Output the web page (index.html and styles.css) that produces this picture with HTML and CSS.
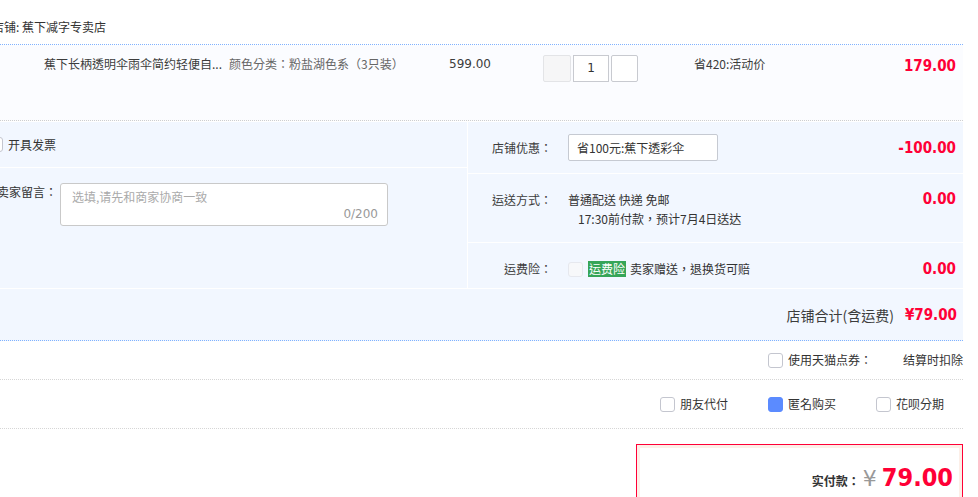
FILE: index.html
```html
<!DOCTYPE html>
<html lang="zh-TW">
<head>
<meta charset="utf-8">
<title>订单</title>
<link rel="stylesheet" href="styles.css">
</head>
<body>
<div class="page">
  <div class="shop">店铺:&nbsp;蕉下减字专卖店</div>

  <div class="item">
    <div class="c-title">蕉下长柄透明伞雨伞简约轻便自...</div>
    <div class="c-sku">颜色分类：粉盐湖色系（3只装）</div>
    <div class="c-price num-font">599.00</div>
    <div class="c-qty">
      <span class="q-btn q-minus"></span>
      <span class="q-num num-font">1</span>
      <span class="q-btn q-plus"></span>
    </div>
    <div class="c-promo">省420:活动价</div>
    <div class="c-sum red-num">179.00</div>
  </div>

  <div class="ext">
    <div class="ext-left">
      <div class="invoice"><span class="cb"></span>开具发票</div>
      <div class="memo">
        <span class="memo-lbl">卖家留言：</span>
        <div class="memo-box">
          <span class="memo-ph">选填,请先和商家协商一致</span>
          <span class="memo-count">0/200</span>
        </div>
      </div>
    </div>
    <div class="ext-right">
      <div class="row row-coupon">
        <span class="lbl">店铺优惠：</span>
        <div class="val"><div class="select">省100元:蕉下透彩伞</div></div>
        <span class="amt red-num">-100.00</span>
      </div>
      <div class="row row-ship">
        <span class="lbl">运送方式：</span>
        <div class="val">
          <div>普通配送 快递 免邮</div>
          <div class="ship-eta">17:30前付款，预计7月4日送达</div>
        </div>
        <span class="amt red-num">0.00</span>
      </div>
      <div class="row row-ins">
        <span class="lbl">运费险：</span>
        <div class="val ins"><span class="cb cb-light"></span><span class="badge">运费险</span>卖家赠送，退换货可赔</div>
        <span class="amt red-num">0.00</span>
      </div>
    </div>
  </div>

  <div class="subtotal"><span class="sub-lbl">店铺合计(含运费)</span><span class="sub-amt red-num">¥79.00</span></div>

  <div class="points">
    <span class="cb"></span><span class="pts-lbl">使用天猫点券：</span><span class="pts-val">结算时扣除</span>
  </div>

  <div class="options">
    <span class="opt"><span class="cb"></span>朋友代付</span>
    <span class="opt"><span class="cb cb-on"></span>匿名购买</span>
    <span class="opt"><span class="cb"></span>花呗分期</span>
  </div>

  <div class="pay-wrap">
    <div class="pay">
      <div class="pay-inner">
        <span class="pay-lbl">实付款：</span>
        <span class="pay-yen">¥</span>
        <span class="pay-amt">79.00</span>
      </div>
    </div>
  </div>
</div>
</body>
</html>
```

FILE: styles.css
```css
html, body {
  margin: 0;
  padding: 0;
  background: #fff;
}

.page {
  margin-left: -16px;
  width: 979px;
  font-family: "Noto Sans CJK TC", "Noto Sans CJK SC", "Noto Sans", sans-serif;
  font-size: 12px;
  line-height: 18px;
  color: #333;
}

.num-font {
  font-family: "DejaVu Sans", sans-serif;
}

.red-num {
  font-family: "DejaVu Sans Condensed", "DejaVu Sans", sans-serif;
  font-stretch: condensed;
  font-weight: bold;
  color: #ff0036;
  font-size: 15px;
}

/* shop header */
.shop {
  height: 45px;
  box-sizing: border-box;
  padding: 18px 0 0 8px;
  border-bottom: 1px dotted #80b2ff;
}

/* item row */
.item {
  display: flex;
  align-items: flex-start;
  height: 76px;
  box-sizing: border-box;
  padding: 10px 7px 0 60px;
  background: #fbfcff;
  border-bottom: 1px dotted #cfcfcf;
}

.c-title {
  width: 185px;
  color: #3c3c3c;
  white-space: nowrap;
  overflow: hidden;
}

.c-sku {
  width: 220px;
  color: #666;
  white-space: nowrap;
}

.c-price {
  width: 94px;
  color: #3c3c3c;
}

.c-qty {
  width: 151px;
  display: flex;
  gap: 2px;
}

.q-btn, .q-num {
  box-sizing: border-box;
  height: 27px;
  border: 1px solid #c8cad0;
  border-radius: 2px;
  background: #fff;
}

.q-minus {
  width: 28px;
  background: #f6f6f7;
  border-color: #e3e4e7;
}

.q-num {
  width: 36px;
  border-radius: 0;
  text-align: center;
  line-height: 25px;
  font-size: 12px;
  color: #333;
}

.q-plus {
  width: 27px;
}

.c-promo {
  flex: 1;
  color: #3c3c3c;
}

.c-sum {
  line-height: 22px;
}

/* extension section */
.ext {
  margin-top: 1px;
  display: flex;
  height: 166px;
  background: #f2f7ff;
}

.ext-left {
  width: 483px;
  border-right: 1px solid #fff;
}

.invoice {
  height: 45px;
  display: flex;
  align-items: center;
  padding-left: 4px;
  border-bottom: 1px solid #fff;
}

.cb {
  display: inline-block;
  box-sizing: border-box;
  width: 15px;
  height: 15px;
  border: 1px solid #c4c6cf;
  border-radius: 3px;
  background: #fff;
  margin-right: 5px;
  flex: none;
}

.cb-light {
  border-color: #e6e8ee;
  background: #f7f8fa;
}

.cb-on {
  background: #5b8bff;
  border-color: #5b8bff;
}

.memo {
  display: flex;
  align-items: flex-start;
  padding-top: 15px;
}

.memo-lbl {
  width: 73px;
  text-align: right;
  white-space: nowrap;
  margin-right: 3px;
}

.memo-box {
  box-sizing: border-box;
  width: 328px;
  height: 43px;
  border: 1px solid #c9c9c9;
  border-radius: 3px;
  background: #fff;
  padding: 5px 9px 0 11px;
  display: flex;
  flex-direction: column;
  line-height: 16px;
}

.memo-ph {
  color: #aaa;
}

.memo-count {
  align-self: flex-end;
  color: #999;
  font-family: "DejaVu Sans", sans-serif;
  font-size: 12px;
  margin-top: 1px;
}

.ext-right {
  flex: 1;
  display: flex;
  flex-direction: column;
}

.row {
  display: flex;
  align-items: center;
  padding-right: 7px;
  border-bottom: 1px solid #fff;
}

.row .lbl {
  width: 84px;
  text-align: right;
  white-space: nowrap;
  color: #3c3c3c;
  flex: none;
}

.row .val {
  flex: 1;
  margin-left: 16px;
}

.row-coupon {
  height: 51px;
}

.select {
  box-sizing: border-box;
  width: 150px;
  height: 27px;
  border: 1px solid #c6cad2;
  border-radius: 2px;
  background: #fff;
  padding-left: 8px;
  line-height: 25px;
  color: #333;
}

.row-ship {
  height: 69px;
  align-items: flex-start;
  padding-top: 16px;
  box-sizing: border-box;
  line-height: 19px;
}

.ship-eta {
  padding-left: 10px;
}

.row-ins {
  height: 44px;
  padding-top: 8px;
  box-sizing: border-box;
  border-bottom: none;
}

.ins {
  display: flex;
  align-items: center;
}

.badge {
  display: inline-block;
  background: #36a558;
  color: #fff;
  height: 16px;
  line-height: 16px;
  padding: 0 1px;
  margin-right: 4px;
}

/* subtotal */
.subtotal {
  margin-top: 1px;
  height: 52px;
  box-sizing: border-box;
  background: #f2f7ff;
  border-bottom: 1px dotted #80b2ff;
  display: flex;
  align-items: center;
  justify-content: flex-end;
  padding-right: 6px;
}

.sub-lbl {
  font-size: 14px;
  color: #3c3c3c;
  margin-right: 11px;
}

/* points */
.points {
  height: 39px;
  box-sizing: border-box;
  border-bottom: 1px dotted #d6d6d6;
  display: flex;
  align-items: center;
  justify-content: flex-end;
}

.pts-lbl {
  width: 115px;
}

/* options */
.options {
  height: 49px;
  box-sizing: border-box;
  border-bottom: 1px dotted #d6d6d6;
  display: flex;
  align-items: center;
  justify-content: flex-end;
  gap: 40px;
  padding-right: 19px;
}

.opt {
  display: flex;
  align-items: center;
}

/* pay box */
.pay-wrap {
  display: flex;
  justify-content: flex-end;
  padding-top: 15px;
}

.pay {
  width: 325px;
  border: 1px solid #ff0036;
  border-bottom: none;
}

.pay-inner {
  border: 3px solid #fcefe8;
  border-bottom: none;
  background: #fff;
  height: 60px;
  box-sizing: border-box;
  padding: 17px 6px 0 0;
  display: flex;
  justify-content: flex-end;
  align-items: baseline;
}

.pay-lbl {
  font-weight: bold;
  color: #333;
  font-size: 12px;
}

.pay-yen {
  font-family: "DejaVu Sans", sans-serif;
  font-size: 22px;
  color: #999;
  margin: 0 5px 0 3px;
}

.pay-amt {
  font-family: "DejaVu Sans Condensed", "DejaVu Sans", sans-serif;
  font-stretch: condensed;
  font-weight: bold;
  font-size: 25px;
  line-height: 25px;
  color: #ff0036;
}
```
